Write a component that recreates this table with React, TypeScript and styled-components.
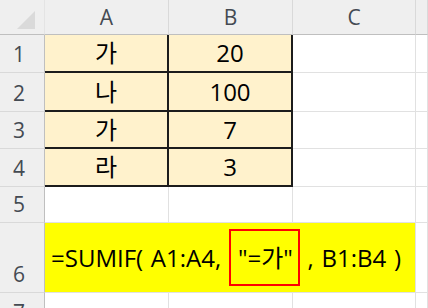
import React from "react";
import styled, { createGlobalStyle } from "styled-components";

const GlobalStyle = createGlobalStyle`
  html, body {
    margin: 0;
    padding: 0;
    background: #ffffff;
  }
  body {
    font-family: "Open Sans", "Noto Sans CJK KR", sans-serif;
  }
`;

const Sheet = styled.div`
  display: grid;
  grid-template-columns: 45px 124px 124px 123px 1fr;
  grid-template-rows: 35px 38px 39px 37px 38px 36px 70px 38px;
  width: 428px;
  height: 308px;
  overflow: hidden;
  background: #ffffff;
`;

const Corner = styled.div`
  display: flex;
  justify-content: flex-end;
  align-items: flex-end;
  padding: 0 9px 5px 0;
  background: #efefef;
  border-right: 1px solid #e4e4e4;
  border-bottom: 1px solid #bfbfbf;
`;

const ColHeader = styled.div`
  display: flex;
  align-items: center;
  justify-content: center;
  background: #efefef;
  border-right: 1px solid #d9d9d9;
  border-bottom: 1px solid #bfbfbf;
  color: #444a52;
  font-size: 21px;
  line-height: 1;
`;

const RowHeader = styled.div`
  display: flex;
  align-items: flex-end;
  justify-content: center;
  padding: 0 6px 7px 0;
  background: #efefef;
  border-right: 1px solid #bfbfbf;
  border-bottom: 1px solid #d9d9d9;
  color: #444a52;
  font-size: 21px;
  line-height: 1;
`;

const Cell = styled.div<{ $data?: boolean }>`
  display: flex;
  align-items: center;
  justify-content: center;
  background: ${(p) => (p.$data ? "#fff2cc" : "#ffffff")};
  border-right: ${(p) => (p.$data ? "2px solid #1c1c1c" : "1px solid #e1e1e1")};
  border-bottom: ${(p) => (p.$data ? "2px solid #1c1c1c" : "1px solid #e1e1e1")};
  color: #000000;
  font-size: 24px;
  line-height: 1;
`;

const FormulaCell = styled.div`
  grid-column: 2 / 5;
  display: flex;
  align-items: center;
  padding-left: 6px;
  background: #ffff00;
  border-right: 1px solid #e1e1e1;
  border-bottom: 1px solid #e1e1e1;
  color: #000000;
  font-size: 24px;
  line-height: 1;
  word-spacing: 1.5px;
  white-space: pre;
`;

const Marked = styled.span`
  display: inline-flex;
  align-items: center;
  height: 53px;
  padding: 0 5px 0 7px;
  border: 2px solid #ff0000;
  vertical-align: middle;
`;

const data: [string, string][] = [
  ["가", "20"],
  ["나", "100"],
  ["가", "7"],
  ["라", "3"],
];

export default function App() {
  return (
    <>
      <GlobalStyle />
      <Sheet>
        <Corner>
          <svg width="18" height="18" viewBox="0 0 18 18">
            <polygon points="0,18 18,18 18,0" fill="#dadada" />
          </svg>
        </Corner>
        <ColHeader>A</ColHeader>
        <ColHeader>B</ColHeader>
        <ColHeader>C</ColHeader>
        <ColHeader />

        {data.map(([label, value], i) => (
          <React.Fragment key={i}>
            <RowHeader>{i + 1}</RowHeader>
            <Cell $data>{label}</Cell>
            <Cell $data>{value}</Cell>
            <Cell />
            <Cell />
          </React.Fragment>
        ))}

        <RowHeader>5</RowHeader>
        <Cell />
        <Cell />
        <Cell />
        <Cell />

        <RowHeader>6</RowHeader>
        <FormulaCell>
          {"=SUMIF( A1:A4, "}
          <Marked>{'"=가"'}</Marked>
          {" , B1:B4 )"}
        </FormulaCell>
        <Cell />

        <RowHeader>7</RowHeader>
        <Cell />
        <Cell />
        <Cell />
        <Cell />
      </Sheet>
    </>
  );
}
